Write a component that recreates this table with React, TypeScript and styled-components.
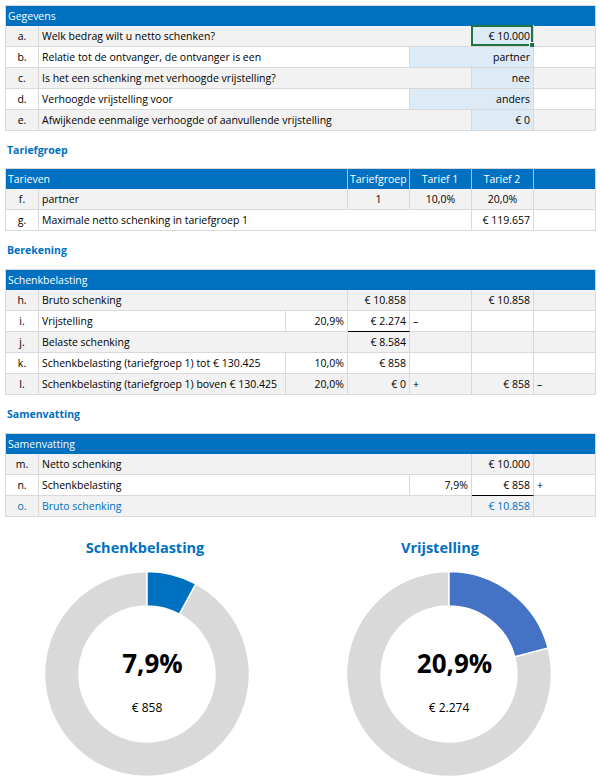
import React from "react";
import styled, { createGlobalStyle, css } from "styled-components";

const Global = createGlobalStyle`
  html, body { margin: 0; padding: 0; background: #ffffff; }
  body { font-family: "Open Sans", "Noto Sans", "Liberation Sans", sans-serif; color: #000; }
`;

const COLS = "33px 247px 62px 62px 62px 62px 62px";
const BLUE = "#0070C0";

const Page = styled.div`
  width: 600px;
  padding: 5px 0 0 5px;
  box-sizing: border-box;
`;

const Sheet = styled.div`
  display: grid;
  grid-template-columns: ${COLS};
  grid-auto-rows: 21px;
  width: 590px;
  border-left: 1px solid #d9d9d9;
  box-sizing: border-box;
`;

type Align = "left" | "center" | "right";

const HeadCell = styled.div<{ $span: number; $align: Align; $last?: boolean }>`
  grid-column: span ${(p) => p.$span};
  background: ${BLUE};
  color: #ffffff;
  font-size: 10.5px;
  line-height: 21px;
  padding: 0 3px 0 2px;
  text-align: ${(p) => p.$align};
  white-space: nowrap;
  overflow: hidden;
  border-right: 1px solid ${(p) => (p.$last ? "#d9d9d9" : "#9dc3e6")};
  border-top: 1px solid #d9d9d9;
  box-sizing: border-box;
`;

const Cell = styled.div<{
  $span: number;
  $align: Align;
  $alt: boolean;
  $input?: boolean;
  $under?: boolean;
  $blue?: boolean;
  $sel?: boolean;
}>`
  position: relative;
  grid-column: span ${(p) => p.$span};
  background: ${(p) => (p.$input ? "#ddebf7" : p.$alt ? "#f2f2f2" : "#ffffff")};
  color: ${(p) => (p.$blue ? BLUE : "#000000")};
  font-size: 10.5px;
  line-height: 20px;
  padding: 0 3px;
  text-align: ${(p) => p.$align};
  white-space: nowrap;
  overflow: visible;
  border-right: 1px solid #d9d9d9;
  border-bottom: 1px solid ${(p) => (p.$under ? "#000000" : "#d9d9d9")};
  box-sizing: border-box;
  ${(p) =>
    p.$sel &&
    css`
      box-shadow: inset 0 0 0 2px #217346;
      margin: -1px 0 0 -1px;
      width: calc(100% + 1px);
      height: 22px;
      line-height: 22px;
    `}
`;

const Handle = styled.span`
  position: absolute;
  right: -3px;
  bottom: -3px;
  width: 5px;
  height: 5px;
  background: #217346;
  border: 1px solid #ffffff;
`;

const SectionTitle = styled.div<{ $h: number }>`
  height: ${(p) => p.$h}px;
  display: flex;
  align-items: center;
  padding-left: 2px;
  color: ${BLUE};
  font-weight: 700;
  font-size: 10.5px;
`;

type C = {
  t?: string;
  s?: number;
  a?: Align;
  input?: boolean;
  under?: boolean;
  blue?: boolean;
  sel?: boolean;
};
type H = { t?: string; s?: number; a?: Align };
type Block = { head: H[]; rows: C[][] };

const L = (t: string, blue?: boolean): C => ({ t, a: "center", blue });
const T = (t: string, s: number, blue?: boolean): C => ({ t, s, a: "left", blue });
const R = (t: string, extra: Partial<C> = {}): C => ({ t, a: "right", ...extra });
const B: C = {};

const gegevens: Block = {
  head: [{ t: "Gegevens", s: 7 }],
  rows: [
    [L("a."), T("Welk bedrag wilt u netto schenken?", 4), R("€ 10.000", { input: true, sel: true }), B],
    [L("b."), T("Relatie tot de ontvanger, de ontvanger is een", 3), R("partner", { s: 2, input: true }), B],
    [L("c."), T("Is het een schenking met verhoogde vrijstelling?", 4), R("nee", { input: true }), B],
    [L("d."), T("Verhoogde vrijstelling voor", 3), R("anders", { s: 2, input: true }), B],
    [L("e."), T("Afwijkende eenmalige verhoogde of aanvullende vrijstelling", 4), R("€ 0", { input: true }), B],
  ],
};

const tarieven: Block = {
  head: [
    { t: "Tarieven", s: 3 },
    { t: "Tariefgroep", a: "center" },
    { t: "Tarief 1", a: "center" },
    { t: "Tarief 2", a: "center" },
    {},
  ],
  rows: [
    [L("f."), T("partner", 2), L("1"), L("10,0%"), L("20,0%"), B],
    [L("g."), T("Maximale netto schenking in tariefgroep 1", 4), R("€ 119.657"), B],
  ],
};

const berekening: Block = {
  head: [{ t: "Schenkbelasting", s: 7 }],
  rows: [
    [L("h."), T("Bruto schenking", 2), R("€ 10.858"), B, R("€ 10.858"), B],
    [L("i."), T("Vrijstelling", 1), R("20,9%"), R("€ 2.274", { under: true }), T("–", 1), B, B],
    [L("j."), T("Belaste schenking", 2), R("€ 8.584"), B, B, B],
    [L("k."), T("Schenkbelasting (tariefgroep 1) tot € 130.425", 1), R("10,0%"), R("€ 858"), B, B, B],
    [L("l."), T("Schenkbelasting (tariefgroep 1) boven € 130.425", 1), R("20,0%"), R("€ 0"), T("+", 1), R("€ 858"), T("–", 1)],
  ],
};

const samenvatting: Block = {
  head: [{ t: "Samenvatting", s: 7 }],
  rows: [
    [L("m."), T("Netto schenking", 4), R("€ 10.000"), B],
    [L("n."), T("Schenkbelasting", 3), R("7,9%"), R("€ 858", { under: true }), T("+", 1)],
    [L("o.", true), T("Bruto schenking", 4, true), R("€ 10.858", { blue: true }), B],
  ],
};

function Table({ block }: { block: Block }) {
  return (
    <Sheet>
      {block.head.map((h, i) => (
        <HeadCell key={i} $span={h.s ?? 1} $align={h.a ?? "left"} $last={i === block.head.length - 1}>
          {h.t}
        </HeadCell>
      ))}
      {block.rows.map((row, r) =>
        row.map((c, i) => (
          <Cell
            key={`${r}-${i}`}
            $span={c.s ?? 1}
            $align={c.a ?? "left"}
            $alt={r % 2 === 0}
            $input={c.input}
            $under={c.under}
            $blue={c.blue}
            $sel={c.sel}
          >
            {c.t}
            {c.sel && <Handle />}
          </Cell>
        ))
      )}
    </Sheet>
  );
}

const Charts = styled.div`
  display: grid;
  grid-template-columns: 294px 294px;
  column-gap: 8px;
  margin: 21px 0 0 -5px;
`;

const ChartPanel = styled.div`
  display: flex;
  flex-direction: column;
  align-items: center;
`;

const ChartTitle = styled.div<{ $shift: number }>`
  color: ${BLUE};
  font-weight: 700;
  font-size: 14.5px;
  line-height: 20px;
  margin-left: ${(p) => p.$shift * 2}px;
  margin-bottom: 12px;
`;

const DonutWrap = styled.div`
  position: relative;
  width: 208px;
  height: 208px;
`;

const DonutLabel = styled.div`
  position: absolute;
  left: 0;
  right: 0;
  top: 0;
  bottom: 0;
  display: flex;
  flex-direction: column;
  align-items: center;
  padding-top: 77px;
  box-sizing: border-box;
`;

const Pct = styled.div`
  font-weight: 700;
  font-size: 26px;
  line-height: 32px;
  color: #000;
  margin-left: 11px;
`;

const Amount = styled.div`
  font-size: 12px;
  line-height: 16px;
  margin-top: 21px;
  color: #000;
`;

function arc(cx: number, cy: number, ro: number, ri: number, a0: number, a1: number) {
  const p = (r: number, a: number) => {
    const rad = (a - 90) * (Math.PI / 180);
    return `${(cx + r * Math.cos(rad)).toFixed(2)} ${(cy + r * Math.sin(rad)).toFixed(2)}`;
  };
  const large = a1 - a0 > 180 ? 1 : 0;
  return `M ${p(ro, a0)} A ${ro} ${ro} 0 ${large} 1 ${p(ro, a1)} L ${p(ri, a1)} A ${ri} ${ri} 0 ${large} 0 ${p(ri, a0)} Z`;
}

function Donut({ frac, color, pct, amount }: { frac: number; color: string; pct: string; amount: string }) {
  const a = frac * 360;
  return (
    <DonutWrap>
      <svg width="208" height="208" viewBox="0 0 208 208">
        <path d={arc(104, 104, 102.5, 68, a, 360)} fill="#d9d9d9" stroke="#fff" strokeWidth="1.5" />
        <path d={arc(104, 104, 102.5, 68, 0, a)} fill={color} stroke="#fff" strokeWidth="1.5" />
      </svg>
      <DonutLabel>
        <Pct>{pct}</Pct>
        <Amount>{amount}</Amount>
      </DonutLabel>
    </DonutWrap>
  );
}

export default function App() {
  return (
    <>
      <Global />
      <Page>
        <Table block={gegevens} />
        <SectionTitle $h={37}>Tariefgroep</SectionTitle>
        <Table block={tarieven} />
        <SectionTitle $h={38}>Berekening</SectionTitle>
        <Table block={berekening} />
        <SectionTitle $h={38}>Samenvatting</SectionTitle>
        <Table block={samenvatting} />
        <Charts>
          <ChartPanel>
            <ChartTitle $shift={-2}>Schenkbelasting</ChartTitle>
            <Donut frac={0.079} color="#0070C0" pct="7,9%" amount="€ 858" />
          </ChartPanel>
          <ChartPanel>
            <ChartTitle $shift={-9}>Vrijstelling</ChartTitle>
            <Donut frac={0.209} color="#4472C4" pct="20,9%" amount="€ 2.274" />
          </ChartPanel>
        </Charts>
      </Page>
    </>
  );
}
